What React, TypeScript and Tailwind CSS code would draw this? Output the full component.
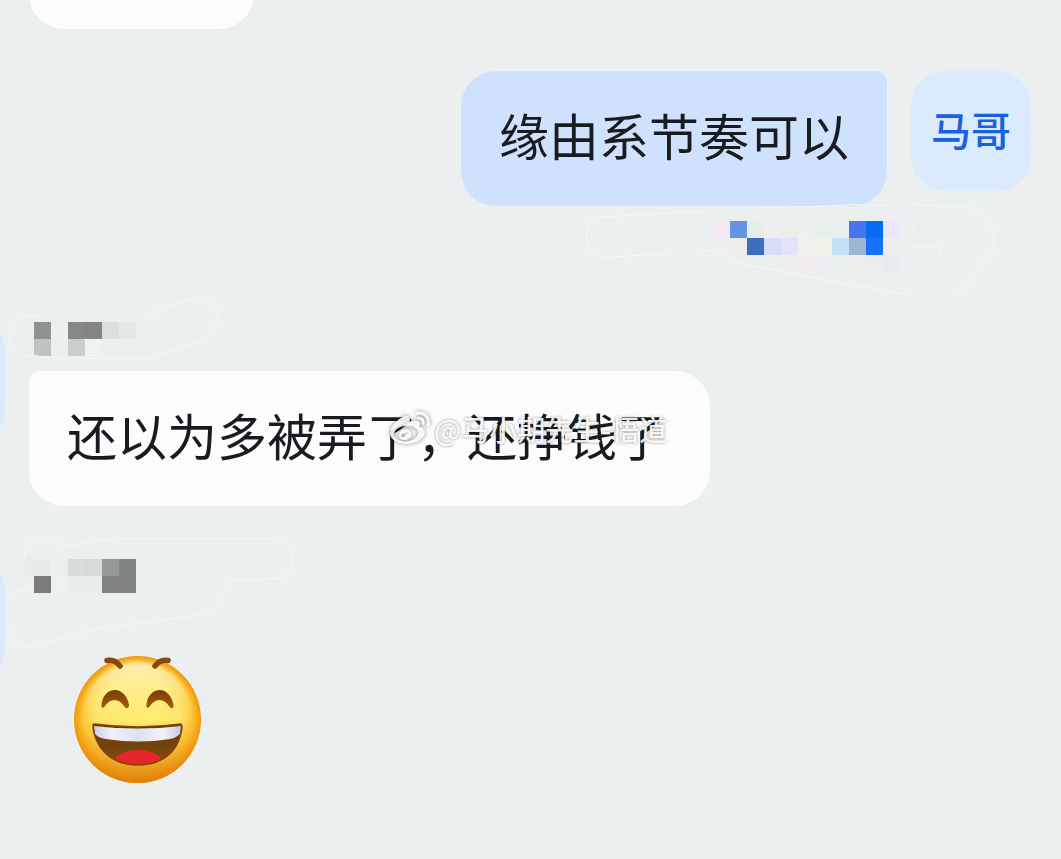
import { ReactNode } from "react";
import { FaWeibo } from "react-icons/fa";

const CELL = 17;

// x, y, colour of each mosaic cell
type Cell = [number, number, string];

interface RedactedNameProps {
  cells: Cell[];
  outlines: string[];
  viewBox: string;
  className: string;
}

const sentName: Cell[] = [
  [713, 221, "#f6e8f0"],
  [730, 221, "#6494e4"],
  [747, 221, "#e6eeed"],
  [764, 221, "#eeedf0"],
  [781, 221, "#e9f0ea"],
  [815, 221, "#e5f0e8"],
  [849, 221, "#4576f0"],
  [866, 221, "#056cf4"],
  [883, 221, "#ece6fa"],
  [917, 221, "#e9edee"],
  [730, 238, "#ecede8"],
  [747, 238, "#3c6ebe"],
  [764, 238, "#d6def4"],
  [781, 238, "#e2e2fa"],
  [798, 238, "#edf1e9"],
  [815, 238, "#f0f0e9"],
  [832, 238, "#c3e2f8"],
  [849, 238, "#9eb6d0"],
  [866, 238, "#1871fa"],
  [883, 238, "#efedec"],
  [781, 255, "#eceeef"],
  [798, 255, "#f0eced"],
  [815, 255, "#efecf1"],
  [832, 255, "#ebefec"],
  [849, 255, "#eeeded"],
  [866, 255, "#eeeded"],
  [883, 255, "#e9ebf2"],
];

const firstName: Cell[] = [
  [34, 42, "#8e9192"],
  [68, 42, "#858788"],
  [85, 42, "#828485"],
  [102, 42, "#dcdfe0"],
  [119, 42, "#e4e7e8"],
  [17, 59, "#e9edee"],
  [34, 59, "#bfc1c2"],
  [68, 59, "#cbcecf"],
  [85, 59, "#eff2f3"],
];

const secondName: Cell[] = [
  [24, 39, "#e8ebec"],
  [34, 39, "#e7eaeb"],
  [68, 39, "#d9dcdd"],
  [85, 39, "#d7dadb"],
  [102, 39, "#959898"],
  [119, 39, "#818485"],
  [34, 56, "#797b7c"],
  [51, 56, "#edf0f1"],
  [68, 56, "#e9eced"],
  [85, 56, "#e8ebec"],
  [102, 56, "#808283"],
  [119, 56, "#808283"],
];

function RedactedName({
  cells,
  outlines,
  viewBox,
  className,
}: RedactedNameProps) {
  return (
    <svg
      viewBox={viewBox}
      className={`block shrink-0 overflow-visible ${className}`}
      aria-hidden="true"
    >
      <g shapeRendering="crispEdges">
        {cells.map(([x, y, fill]) => (
          <rect
            key={`${x}-${y}`}
            x={x}
            y={y}
            width={CELL}
            height={CELL}
            fill={fill}
          />
        ))}
      </g>
      {outlines.map((d) => (
        <path key={d} d={d} fill="none" stroke="#f5f7f8" strokeWidth="1" />
      ))}
    </svg>
  );
}

function ReceivedMessage({
  name,
  children,
}: {
  name: ReactNode;
  children: ReactNode;
}) {
  return (
    <article className="-ml-[115px] flex items-start gap-6">
      <div className="size-[120px] shrink-0 rounded-[30px] bg-[#dbe9fc]" />
      <div className="shrink-0">
        {name}
        {children}
      </div>
    </article>
  );
}

function Watermark() {
  return (
    <div className="absolute top-[38px] left-[361px] flex h-10 items-center gap-1 whitespace-nowrap text-white/90">
      <FaWeibo
        className="size-10 shrink-0 drop-shadow-[0_0_2px_rgba(0,0,0,0.5)]"
        aria-hidden="true"
      />
      <span className="text-[28px] leading-10 font-medium [text-shadow:0_0_3px_rgba(0,0,0,0.45)]">
        @马小期先生-悟道
      </span>
    </div>
  );
}

function LaughingFace() {
  return (
    <svg
      viewBox="0 0 160 160"
      className="block size-40"
      role="img"
      aria-label="大笑"
    >
      <defs>
        <radialGradient id="face" cx="0.5" cy="0.5" r="0.5">
          <stop offset="0" stopColor="#ffee6e" />
          <stop offset="0.66" stopColor="#fee468" />
          <stop offset="0.84" stopColor="#fcca3c" />
          <stop offset="0.93" stopColor="#f8b01c" />
          <stop offset="1" stopColor="#ee990f" />
        </radialGradient>
        <linearGradient id="glow" x1="0" y1="0" x2="0" y2="1">
          <stop offset="0" stopColor="#fff6d0" stopOpacity="0.85" />
          <stop offset="0.45" stopColor="#fff3a0" stopOpacity="0.2" />
          <stop offset="0.6" stopColor="#fff3a0" stopOpacity="0" />
        </linearGradient>
        <linearGradient id="shade" x1="0" y1="0" x2="0" y2="1">
          <stop offset="0.5" stopColor="#f0920c" stopOpacity="0" />
          <stop offset="1" stopColor="#dd7a08" stopOpacity="0.85" />
        </linearGradient>
        <linearGradient id="brow" x1="0" y1="0" x2="0" y2="1">
          <stop offset="0" stopColor="#7a3d08" />
          <stop offset="1" stopColor="#a35c0c" />
        </linearGradient>
        <linearGradient id="mouth" x1="0" y1="0" x2="0" y2="1">
          <stop offset="0" stopColor="#653407" />
          <stop offset="1" stopColor="#83500c" />
        </linearGradient>
        <linearGradient id="teeth" x1="0" y1="0" x2="1" y2="0">
          <stop offset="0" stopColor="#c9cce0" />
          <stop offset="0.2" stopColor="#f2f2fa" />
          <stop offset="0.5" stopColor="#dfe1ee" />
          <stop offset="0.8" stopColor="#f2f2fa" />
          <stop offset="1" stopColor="#c4c7de" />
        </linearGradient>
        <filter id="soften" x="-20%" y="-20%" width="140%" height="140%">
          <feGaussianBlur stdDeviation="2" />
        </filter>
        <clipPath id="mouth-clip">
          <path d="M34 84Q78 90 121 84Q123 86 121 93C117 112 102 125 78 125S39 112 34 93Q32 84 34 84Z" />
        </clipPath>
      </defs>
      <circle cx="77.500" cy="79.500" r="63.500" fill="url(#face)" />
      <ellipse
        cx="77.500"
        cy="73"
        rx="54"
        ry="51"
        fill="url(#glow)"
        filter="url(#soften)"
      />
      <circle cx="77.500" cy="79.500" r="63.500" fill="url(#shade)" />
      <g fill="none" stroke="#854a0a" strokeLinecap="round">
        <path d="M47 20.500Q55 19 60 26" strokeWidth="5.500" />
        <path d="M108 20.500Q100 19 95 26" strokeWidth="5.500" />
      </g>
      <g fill="url(#brow)">
        <path d="M41.500 65C42 56 48 50 55 50S68 57 69 65C69 69 66 69 64 66C59 58 50 58 45 66C43 69 41 68 41.500 65Z" />
        <path d="M86.500 65C87 56 93 50 100 50S112 57 113.500 65C114 69 111 69 109 66C104 58 95 58 90 66C88 69 86 68 86.500 65Z" />
      </g>
      <g clipPath="url(#mouth-clip)">
        <rect x="30" y="80" width="96" height="48" fill="url(#mouth)" />
        <ellipse cx="78" cy="124" rx="25" ry="14" fill="#e6252b" />
        <path
          d="M34 86Q78 91 121 86L120 94Q116 98 110 99Q78 104 46 99Q38 98 35 94Z"
          fill="url(#teeth)"
        />
      </g>
      <path
        d="M34 84Q78 90 121 84Q123 86 121 93C117 112 102 125 78 125S39 112 34 93Q32 84 34 84Z"
        fill="none"
        stroke="#804506"
        strokeWidth="1.500"
      />
    </svg>
  );
}

export default function App() {
  return (
    <main className="min-h-screen overflow-hidden bg-[#ebeff0] font-['Noto_Sans_CJK_SC',sans-serif] text-[#181c20]">
      <div className="-mt-[106px] ml-[29px] h-[135px] w-[225px] rounded-[35px] bg-[#fcfcfc]" />

      <article className="mt-[42px] flex items-start justify-end gap-6 pr-[30px]">
        <p className="rounded-[35px] rounded-tr-[12px] bg-[#cfe1fc] px-[38px] pt-[26px] pb-[35px] text-[50px] leading-[74px] whitespace-nowrap">
          缘由系节奏可以
        </p>
        <div className="flex size-[120px] shrink-0 items-center justify-center rounded-[34px] bg-[#dbeafc] pb-1 text-[40px] font-medium text-[#1762e2]">
          马哥
        </div>
      </article>

      <div className="flex justify-end pr-[61px]">
        <RedactedName
          viewBox="580 206 420 90"
          className="h-[90px] w-[420px]"
          cells={sentName}
          outlines={[
            "M705 211L600 217C580 222 582 255 605 257.500L670 253.500",
            "M760 207.500L832 206L852 204.500L887 205.500",
            "M912 204.500L960 207C984 206 995 222 994 245L990 260L980 263Q974 286 955 295",
            "M700 251H718Q740 266 765 268L830 281L910 295",
            "M911 250L914 246.500H939.500V253",
          ]}
        />
      </div>

      <div className="mt-[25px] flex flex-col gap-[54px]">
        <ReceivedMessage
          name={
            <RedactedName
              viewBox="29 41 200 50"
              className="h-[50px] w-[200px]"
              cells={firstName}
              outlines={[
                "M40 36Q12 33 10 54T28 75L62 78.500H148L202 60C225 50 221 17 199 18Q190 17 145 37",
              ]}
            />
          }
        >
          <div className="relative">
            <p className="rounded-[35px] rounded-tl-[12px] bg-[#fcfcfc] pt-[26px] pr-[43px] pb-[35px] pl-[38px] text-[50px] leading-[74px] whitespace-nowrap">
              还以为多被弄了，还挣钱了
            </p>
            <Watermark />
          </div>
        </ReceivedMessage>

        <ReceivedMessage
          name={
            <RedactedName
              viewBox="29 40 300 80"
              className="h-20 w-[300px]"
              cells={secondName}
              outlines={[
                "M24 39C25 16 50 13 60 25Q72 28 90 21L118 19H278C296 22 297 53 280 58L232 61C220 72 225 90 200 95L95 109L65 118L30 127C17 128 9 120 8 108",
                "M13 74Q18 69 29 69.500",
              ]}
            />
          }
        >
          <div className="pl-[31px]">
            <LaughingFace />
          </div>
        </ReceivedMessage>
      </div>
    </main>
  );
}
